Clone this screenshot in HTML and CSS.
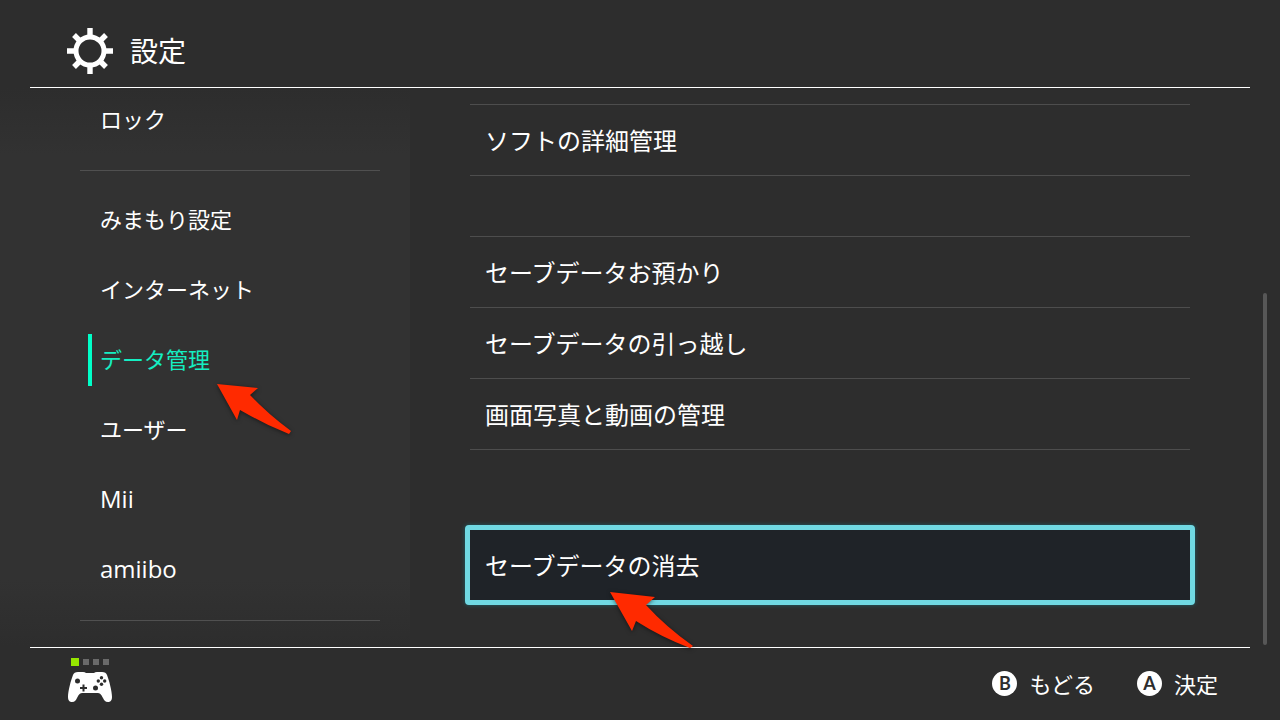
FILE: index.html
```html
<!DOCTYPE html>
<html lang="ja">
<head>
<meta charset="utf-8">
<meta name="viewport" content="width=device-width, initial-scale=1">
<title>設定</title>
<link rel="stylesheet" href="styles.css">
</head>
<body>
<div class="screen">
  <header class="header">
    <svg class="gear" viewBox="0 0 48 48" aria-hidden="true">
      <circle cx="24" cy="24" r="14" fill="none" stroke="currentColor" stroke-width="5"/>
      <path d="M24 1v9M24 38v9M1 24h9M38 24h9M8 8l6 6M34 34l6 6M8 40l6-6M34 14l6-6" fill="none" stroke="currentColor" stroke-width="5.4"/>
    </svg>
    <h1 class="title">設定</h1>
  </header>

  <main class="main">
    <nav class="sidebar" aria-label="設定">
      <ul class="menu">
        <li><button class="menu-item" type="button">ロック</button></li>
        <li class="divider"></li>
        <li><button class="menu-item" type="button">みまもり設定</button></li>
        <li><button class="menu-item" type="button">インターネット</button></li>
        <li><button class="menu-item active" type="button" aria-current="page">データ管理</button></li>
        <li><button class="menu-item" type="button">ユーザー</button></li>
        <li><button class="menu-item latin" type="button">Mii</button></li>
        <li><button class="menu-item latin" type="button">amiibo</button></li>
        <li class="divider"></li>
      </ul>
    </nav>

    <section class="content" aria-label="データ管理">
      <div class="group">
        <button class="row" type="button">ソフトの詳細管理</button>
      </div>
      <div class="group">
        <button class="row" type="button">セーブデータお預かり</button>
        <button class="row" type="button">セーブデータの引っ越し</button>
        <button class="row" type="button">画面写真と動画の管理</button>
      </div>
      <button class="focused" type="button">セーブデータの消去</button>
    </section>
    <div class="scrollbar"></div>
  </main>

  <footer class="footer">
    <div class="controller">
      <div class="players"><span class="lamp on"></span><span class="lamp"></span><span class="lamp"></span><span class="lamp"></span></div>
      <svg class="pad" viewBox="0 0 46 32" aria-hidden="true">
        <path d="M11 1h5q2 0 3 1h8q1-1 3-1h5q4 0 5 3c2 5 5 16 5 22 0 4-2 5-4 5-3 0-4-2-5-4-2-4-3-5-6-5H16c-3 0-4 1-6 5-1 2-2 4-5 4-2 0-4-1-4-5C1 20 4 9 6 4q1-3 5-3z" fill="#fff"/>
        <g fill="#2d2d2d">
          <circle cx="10.500" cy="10" r="2.500"/>
          <circle cx="28.500" cy="17" r="2.500"/>
          <path d="M15.500 13.500h2v2.500h2.500v2h-2.500v2.500h-2V18H13v-2h2.500z"/>
          <circle cx="34.500" cy="6.800" r="1.700"/>
          <circle cx="34.500" cy="13.200" r="1.700"/>
          <circle cx="31.300" cy="10" r="1.700"/>
          <circle cx="37.700" cy="10" r="1.700"/>
        </g>
      </svg>
    </div>
    <div class="actions">
      <button class="action" type="button"><span class="key">B</span>もどる</button>
      <button class="action" type="button"><span class="key">A</span>決定</button>
    </div>
  </footer>

  <svg class="arrow arrow-menu" viewBox="0 0 76 52" aria-hidden="true">
    <path d="M1 1L42 5L34 12Q52 31 75 48L73 51Q48 41 24 27L21 37Z"/>
  </svg>
  <svg class="arrow arrow-row" viewBox="0 0 84 58" aria-hidden="true">
    <path d="M1 1L46 6L37 14Q57 36 84 55L81 57Q52 46 27 30L23 40Z"/>
  </svg>
</div>
</body>
</html>
```

FILE: styles.css
```css
* {
  box-sizing: border-box;
}

body {
  margin: 0;
  background: #2d2d2d;
  color: #fff;
  font-family: "Noto Sans CJK JP", sans-serif;
  font-size: 22px;
}

button {
  margin: 0;
  border: 0;
  background: none;
  color: inherit;
  font: inherit;
  text-align: left;
  cursor: pointer;
}

.screen {
  position: relative;
  display: flex;
  flex-direction: column;
  min-height: 100vh;
}

.header {
  display: flex;
  align-items: center;
  gap: 16px;
  height: 88px;
  margin: 0 30px;
  padding: 14px 36px 0;
  border-bottom: 1px solid #fff;
}

.gear {
  width: 48px;
  height: 48px;
}

.title {
  margin: 0;
  padding-bottom: 2px;
  font-size: 28px;
  font-weight: 400;
  line-height: 40px;
}

.main {
  position: relative;
  display: flex;
  flex: 1;
}

.sidebar {
  flex: none;
  width: 410px;
  padding: 6px 30px 0 80px;
  background: linear-gradient(#2d2d2d, #323232 12%, #323232 88%, #2d2d2d);
}

.menu {
  display: grid;
  gap: 18px;
  margin: 0;
  padding: 0;
  list-style: none;
}

.menu-item {
  display: block;
  width: 100%;
  height: 52px;
  padding: 0 8px 4px 20px;
  line-height: 48px;
}

.menu-item.active {
  margin-left: 8px;
  padding-left: 8px;
  border-left: 4px solid #00ffc8;
  color: #15eec2;
}

.menu-item.latin {
  padding-bottom: 2px;
  font-family: "Open Sans", "Noto Sans CJK JP", sans-serif;
  font-size: 24px;
}

.divider {
  height: 1px;
  margin: 6px 0 5px;
  background: #505050;
}

.content {
  flex: 1;
  padding: 16px 90px 42px 60px;
  font-size: 24px;
}

.group {
  margin-bottom: 60px;
  border-top: 1px solid #4d4d4d;
}

.row {
  display: block;
  width: 100%;
  height: 71px;
  padding: 0 15px 2px;
  border-bottom: 1px solid #4d4d4d;
}

.focused {
  display: block;
  width: calc(100% + 10px);
  height: 80px;
  margin: 75px -5px 0;
  padding: 0 15px 2px;
  border: 5px solid #70d9e3;
  border-radius: 4px;
  background: #1f2328;
  box-shadow: 0 0 4px #1d6068;
}

.scrollbar {
  position: absolute;
  right: 13px;
  bottom: 2px;
  width: 4px;
  height: 63%;
  border-radius: 2px;
  background: #575757;
}

.footer {
  display: flex;
  align-items: center;
  justify-content: space-between;
  height: 73px;
  margin: 0 30px;
  padding: 0 32px 0 37px;
  border-top: 1px solid #fff;
}

.controller {
  display: grid;
  gap: 5px;
  padding-bottom: 8px;
}

.players {
  display: flex;
  align-items: center;
  gap: 4px;
  padding-left: 4px;
}

.lamp {
  width: 6px;
  height: 6px;
  background: #6a6a6a;
}

.lamp.on {
  width: 8px;
  height: 8px;
  background: #96e600;
}

.pad {
  display: block;
  width: 46px;
  height: 32px;
}

.actions {
  display: flex;
  gap: 42px;
  padding-bottom: 2px;
}

.action {
  display: flex;
  align-items: center;
  gap: 12px;
  padding: 0;
}

.key {
  width: 25px;
  height: 25px;
  border-radius: 50%;
  background: #fff;
  color: #2d2d2d;
  font-family: Lato, sans-serif;
  font-size: 18px;
  font-weight: 700;
  line-height: 25px;
  text-align: center;
}

.arrow {
  position: absolute;
  fill: #ff2a00;
  overflow: visible;
  filter: drop-shadow(0 1px 2px rgba(0, 0, 0, 0.5));
}

.arrow-menu {
  left: 216px;
  top: 383px;
  width: 76px;
  height: 52px;
}

.arrow-row {
  left: 609px;
  top: 591px;
  width: 84px;
  height: 58px;
}
```
